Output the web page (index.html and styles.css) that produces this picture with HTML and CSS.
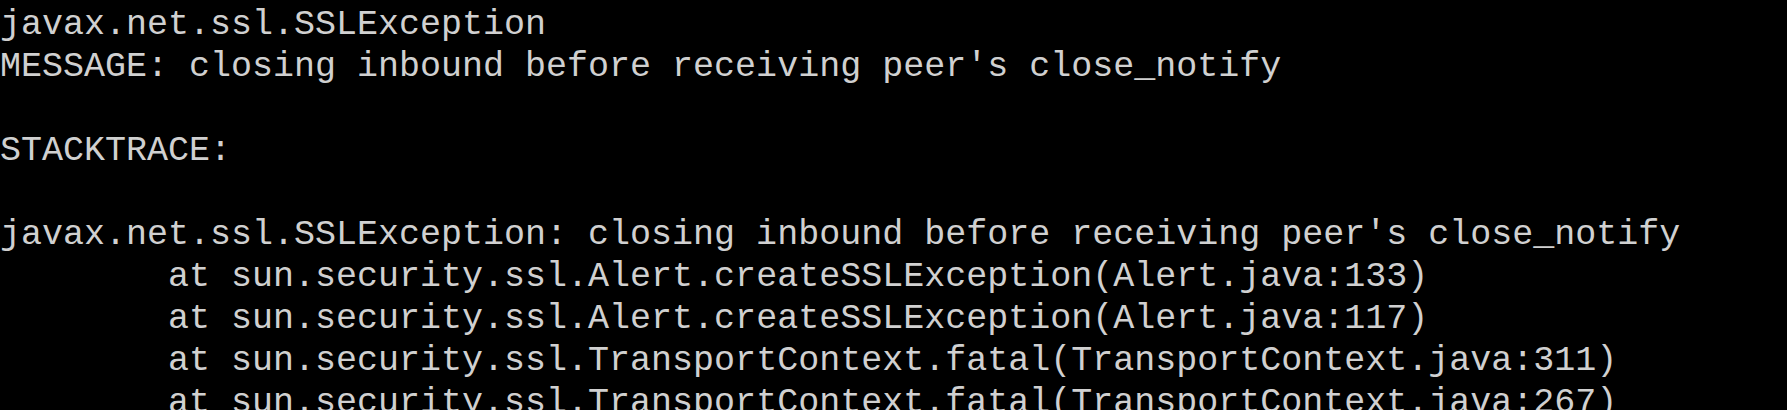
FILE: index.html
```html
<!DOCTYPE html>
<html>
<head>
<meta charset="utf-8">
<link rel="stylesheet" href="styles.css">
</head>
<body>
<pre class="console">javax.net.ssl.SSLException
MESSAGE: closing inbound before receiving peer's close_notify

STACKTRACE:

javax.net.ssl.SSLException: closing inbound before receiving peer's close_notify
	at sun.security.ssl.Alert.createSSLException(Alert.java:133)
	at sun.security.ssl.Alert.createSSLException(Alert.java:117)
	at sun.security.ssl.TransportContext.fatal(TransportContext.java:311)
	at sun.security.ssl.TransportContext.fatal(TransportContext.java:267)
</pre>
</body>
</html>
```
FILE: styles.css
```css
html, body {
  margin: 0;
  padding: 0;
  background: #000;
  overflow: hidden;
}
.console {
  margin: 0;
  padding: 4px 0 0 0;
  font-family: "Liberation Mono", "Courier New", monospace;
  font-size: 35px;
  line-height: 42px;
  color: #d0d0d0;
  tab-size: 8;
  white-space: pre;
}
```
